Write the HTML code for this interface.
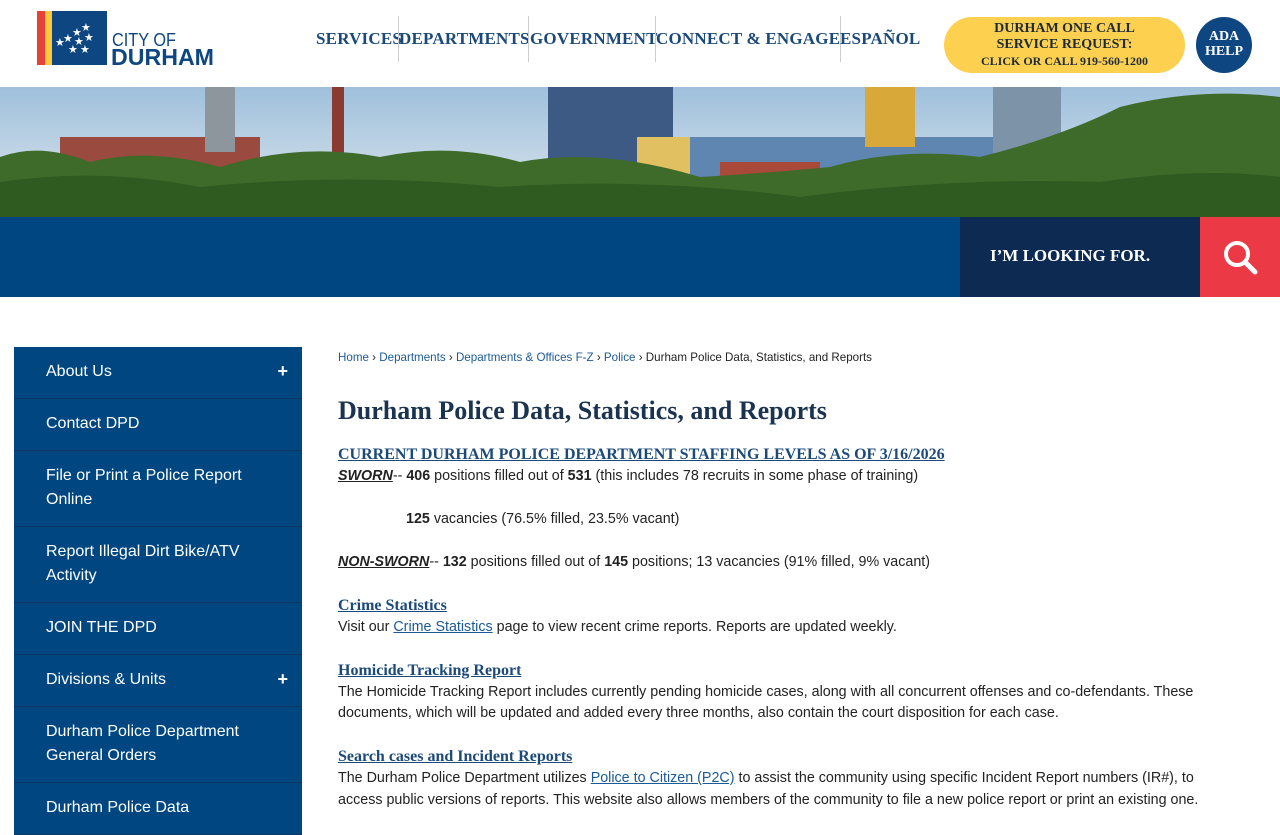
<!DOCTYPE html>
<html><head><meta charset="utf-8"><style>
*{margin:0;padding:0;box-sizing:border-box}
body{width:1280px;height:800px;overflow:hidden;background:#fff;font-family:"Liberation Sans",Arial,sans-serif;color:#222}
.hdr{position:absolute;left:0;top:0;width:1280px;height:87px;background:#fff}
.nav{position:absolute;top:29px;font-family:"Liberation Serif",serif;font-weight:bold;font-size:17px;color:#1b4a7a;letter-spacing:0.2px}
.sep{position:absolute;top:16px;width:1px;height:46px;background:#ccc}
.call{position:absolute;left:944px;top:17px;width:241px;height:56px;border-radius:28px;background:#fdd14f;text-align:center;font-family:"Liberation Serif",serif;font-weight:bold;color:#1c2a3a;font-size:14px;line-height:16px;padding-top:4px}
.ada{position:absolute;left:1196px;top:17px;width:56px;height:56px;border-radius:50%;background:#0d4680;color:#fff;text-align:center;font-family:"Liberation Serif",serif;font-weight:bold;font-size:14px;line-height:15px;padding-top:12px}
.bar{position:absolute;left:0;top:217px;width:1280px;height:80px;background:#004680}
.look{position:absolute;left:960px;top:217px;width:240px;height:80px;background:#0c2a52;color:#fff;font-family:"Liberation Serif",serif;font-weight:bold;font-size:17px;padding:29px 0 0 30px}
.srch{position:absolute;left:1200px;top:217px;width:80px;height:80px;background:#ec3946}
.side{position:absolute;left:14px;top:347px;width:288px;background:#004680}
.side div{color:#fff;font-size:16px;line-height:24px;padding:13px 40px 14px 32px;border-bottom:1px solid #0a3763;position:relative}
.side div span{position:absolute;right:14px;top:12px;font-weight:bold;font-size:18px}
.main{position:absolute;left:338px;top:347px;width:870px;font-size:14.3px;line-height:21.5px;color:#222}
.bc{font-size:11.6px;color:#222}
.bc a{color:#1b5a96;text-decoration:none}
h1{font-family:"Liberation Serif",serif;font-size:26px;color:#1a3350;margin:26px 0 17px;line-height:32px}
h3{font-family:"Liberation Serif",serif;font-size:16px;color:#1b4a7a;text-decoration:underline;line-height:22px}
a.l{color:#1b5a96;text-decoration:underline}
p{margin:0}
</style></head><body>
<div class="hdr">
 <svg style="position:absolute;left:37px;top:11px" width="185" height="56">
  <rect x="0" y="0" width="8" height="54" fill="#e8413a"/><rect x="8" y="0" width="7" height="54" fill="#fdc93a"/>
  <rect x="15" y="0" width="55" height="54" fill="#0d4680"/>
  <g fill="#fff" font-size="11" font-family="DejaVu Sans">
   <text x="44" y="20">★</text><text x="35" y="25">★</text><text x="47" y="30">★</text><text x="26" y="31">★</text><text x="37" y="34">★</text><text x="31" y="42">★</text><text x="43" y="42">★</text><text x="18" y="35">★</text>
  </g>
  <text x="75" y="35" font-family="Liberation Sans" font-size="18" fill="#0d4680" textLength="64" lengthAdjust="spacingAndGlyphs">CITY OF</text>
  <text x="74" y="54" font-family="Liberation Sans" font-weight="bold" font-size="23" fill="#0d4680" textLength="103" lengthAdjust="spacingAndGlyphs">DURHAM</text>
 </svg>
 <div class="nav" style="left:316px">SERVICES</div>
 <div class="sep" style="left:398px"></div>
 <div class="nav" style="left:399px">DEPARTMENTS</div>
 <div class="sep" style="left:528px"></div>
 <div class="nav" style="left:530px">GOVERNMENT</div>
 <div class="sep" style="left:655px"></div>
 <div class="nav" style="left:656px">CONNECT &amp; ENGAGE</div>
 <div class="sep" style="left:840px"></div>
 <div class="nav" style="left:840px">ESPAÑOL</div>
 <div class="call">DURHAM ONE CALL<br>SERVICE REQUEST:<br><span style="font-size:12px">CLICK OR CALL 919-560-1200</span></div>
 <div class="ada">ADA<br>HELP</div>
</div>
<svg style="position:absolute;left:0;top:87px" width="1280" height="130">
 <defs><linearGradient id="sk" x1="0" y1="0" x2="0" y2="1"><stop offset="0" stop-color="#9fc0dc"/><stop offset="1" stop-color="#dfe8ee"/></linearGradient></defs>
 <rect width="1280" height="130" fill="url(#sk)"/>
 <rect x="60" y="50" width="200" height="50" fill="#9a4a3e"/>
 <rect x="205" y="0" width="30" height="65" fill="#8c969c"/>
 <rect x="548" y="0" width="125" height="90" fill="#3d5a84"/>
 <rect x="637" y="50" width="60" height="50" fill="#e0c060"/>
 <rect x="690" y="50" width="380" height="65" fill="#5f86b0"/>
 <rect x="720" y="75" width="100" height="45" fill="#a9493a"/>
 <rect x="865" y="0" width="50" height="60" fill="#d8a838"/>
 <rect x="993" y="0" width="68" height="70" fill="#7d94a8"/>
 <rect x="332" y="0" width="12" height="100" fill="#8a3a30"/>
 <path d="M0 70 Q40 55 90 75 Q150 60 220 80 Q300 55 380 70 Q450 55 520 75 Q600 60 700 90 Q780 85 830 80 Q900 60 980 70 Q1060 50 1120 20 Q1200 0 1280 10 L1280 130 L0 130Z" fill="#3e6b2a"/>
 <path d="M0 95 Q100 80 200 100 Q350 85 500 100 Q650 90 800 110 Q950 90 1100 95 Q1200 80 1280 90 L1280 130 L0 130Z" fill="#2f5a20"/>
</svg>
<div class="bar"></div>
<div class="look">I’M LOOKING FOR.</div>
<div class="srch"><svg width="80" height="80"><circle cx="37" cy="37" r="11" fill="none" stroke="#fff" stroke-width="4"/><line x1="45" y1="45" x2="55" y2="55" stroke="#fff" stroke-width="5" stroke-linecap="round"/></svg></div>
<div class="side">
 <div>About Us<span>+</span></div>
 <div>Contact DPD</div>
 <div>File or Print a Police Report Online</div>
 <div>Report Illegal Dirt Bike/ATV Activity</div>
 <div>JOIN THE DPD</div>
 <div>Divisions &amp; Units<span>+</span></div>
 <div>Durham Police Department General Orders</div>
 <div>Durham Police Data</div>
</div>
<div class="main">
 <div class="bc"><a>Home</a> › <a>Departments</a> › <a>Departments &amp; Offices F-Z</a> › <a>Police</a> › Durham Police Data, Statistics, and Reports</div>
 <h1>Durham Police Data, Statistics, and Reports</h1>
 <h3>CURRENT DURHAM POLICE DEPARTMENT STAFFING LEVELS AS OF 3/16/2026</h3>
 <p><b><i><u>SWORN</u></i></b>-- <b>406</b> positions filled out of <b>531</b> (this includes 78 recruits in some phase of training)</p>
 <p>&nbsp;</p>
 <p style="padding-left:68px"><b>125</b> vacancies (76.5% filled, 23.5% vacant)</p>
 <p>&nbsp;</p>
 <p><b><i><u>NON-SWORN</u></i></b>-- <b>132</b> positions filled out of <b>145</b> positions; 13 vacancies (91% filled, 9% vacant)</p>
 <p>&nbsp;</p>
 <h3>Crime Statistics</h3>
 <p>Visit our <a class="l">Crime Statistics</a> page to view recent crime reports. Reports are updated weekly.</p>
 <p>&nbsp;</p>
 <h3>Homicide Tracking Report</h3>
 <p>The Homicide Tracking Report includes currently pending homicide cases, along with all concurrent offenses and co-defendants. These documents, which will be updated and added every three months, also contain the court disposition for each case.</p>
 <p>&nbsp;</p>
 <h3>Search cases and Incident Reports</h3>
 <p>The Durham Police Department utilizes <a class="l">Police to Citizen (P2C)</a> to assist the community using specific Incident Report numbers (IR#), to access public versions of reports. This website also allows members of the community to file a new police report or print an existing one.</p>
</div>
</body></html>
